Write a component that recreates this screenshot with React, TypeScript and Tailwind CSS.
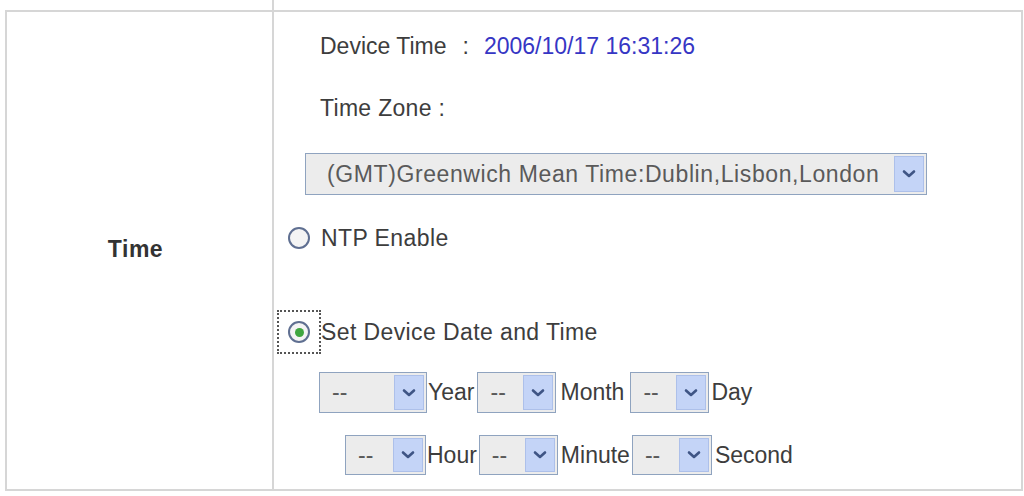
import React from 'react';

const FONT = 'font-["Liberation_Sans",Arial,sans-serif]';

function Chevron() {
  return (
    <svg width="14" height="10" viewBox="0 0 14 10">
      <path d="M2 2.5 L7 7 L12 2.5" fill="none" stroke="#3f5585" strokeWidth="2.6" strokeLinecap="round" strokeLinejoin="round" />
    </svg>
  );
}

function Drop({ value, className, textClass = 'pl-[10px]' }: { value: string; className: string; textClass?: string }) {
  return (
    <div className={`${className} flex border border-[#8fa3bf] bg-[#ececec] p-[2px] shrink-0`}>
      <span className={`flex-1 flex items-center text-[#5a5a5a] whitespace-nowrap overflow-hidden ${textClass}`}>{value}</span>
      <span className="w-[30px] flex items-center justify-center bg-[#c4d4f7] border border-[#adc0ea]">
        <Chevron />
      </span>
    </div>
  );
}

function Radio({ checked, focused }: { checked?: boolean; focused?: boolean }) {
  return (
    <div className={`w-[44px] h-[44px] flex items-center justify-center shrink-0 ${focused ? 'border-2 border-dotted border-[#555]' : ''}`}>
      <div className="w-[22px] h-[22px] rounded-full border-2 border-[#5f6f91] bg-[#f4f4f4] flex items-center justify-center">
        {checked && <div className="w-[9px] h-[9px] rounded-full bg-[#3fa63f]" />}
      </div>
    </div>
  );
}

export default function App() {
  return (
    <div className={`w-[1024px] h-[496px] bg-white pl-[5px] text-[23px] text-[#3d3d3d] ${FONT}`}>
      <div className="h-[10px] ml-[267px] border-l-2 border-[#d6d6d6]" />
      <div className="w-[1018px] h-[481px] border-2 border-[#d6d6d6] flex">
        {/* label column */}
        <div className="w-[267px] border-r-2 border-[#d6d6d6] flex items-center justify-center pb-[2px] pr-[8px]">
          <span className="font-bold text-[#333] tracking-[0.5px]">Time</span>
        </div>

        {/* settings column */}
        <div className="flex-1 flex flex-col">
          <div className="h-[32px] mt-[18px] pl-[46px] flex items-center">
            <span>Device Time</span>
            <span className="ml-[16px]">:</span>
            <span className="ml-[15px] text-[#3636c4]">2006/10/17 16:31:26</span>
          </div>
          <div className="h-[32px] mt-[30px] pl-[46px] flex items-center tracking-[0.3px]">Time Zone :</div>
          <div className="mt-[29px] pl-[31px]">
            <Drop
              value="(GMT)Greenwich Mean Time:Dublin,Lisbon,London"
              className="w-[622px] h-[42px]"
              textClass="pl-[19px] tracking-[0.6px]"
            />
          </div>
          <div className="pl-[3px] flex items-center h-[44px] mt-[21px]">
            <Radio />
            <span className="tracking-[0.4px]">NTP Enable</span>
          </div>
          <div className="mt-[50px] pl-[3px] flex items-center h-[44px]">
            <Radio checked focused />
            <span className="tracking-[0.4px]">Set Device Date and Time</span>
          </div>
          <div className="mt-[18px] pl-[45px] flex items-center h-[41px]">
            <Drop value="--" className="w-[108px] h-[41px]" />
            <span className="ml-[1px] mr-[3px]">Year</span>
            <Drop value="--" className="w-[79px] h-[41px]" />
            <span className="ml-[4px] mr-[6px]">Month</span>
            <Drop value="--" className="w-[79px] h-[41px]" />
            <span className="ml-[2px]">Day</span>
          </div>
          <div className="mt-[22px] pl-[71px] flex items-center h-[40px]">
            <Drop value="--" className="w-[81px] h-[40px]" />
            <span className="ml-[1px] mr-[2px]">Hour</span>
            <Drop value="--" className="w-[79px] h-[40px]" />
            <span className="ml-[3px] mr-[2px]">Minute</span>
            <Drop value="--" className="w-[80px] h-[40px]" />
            <span className="ml-[3px]">Second</span>
          </div>
        </div>
      </div>
    </div>
  );
}
